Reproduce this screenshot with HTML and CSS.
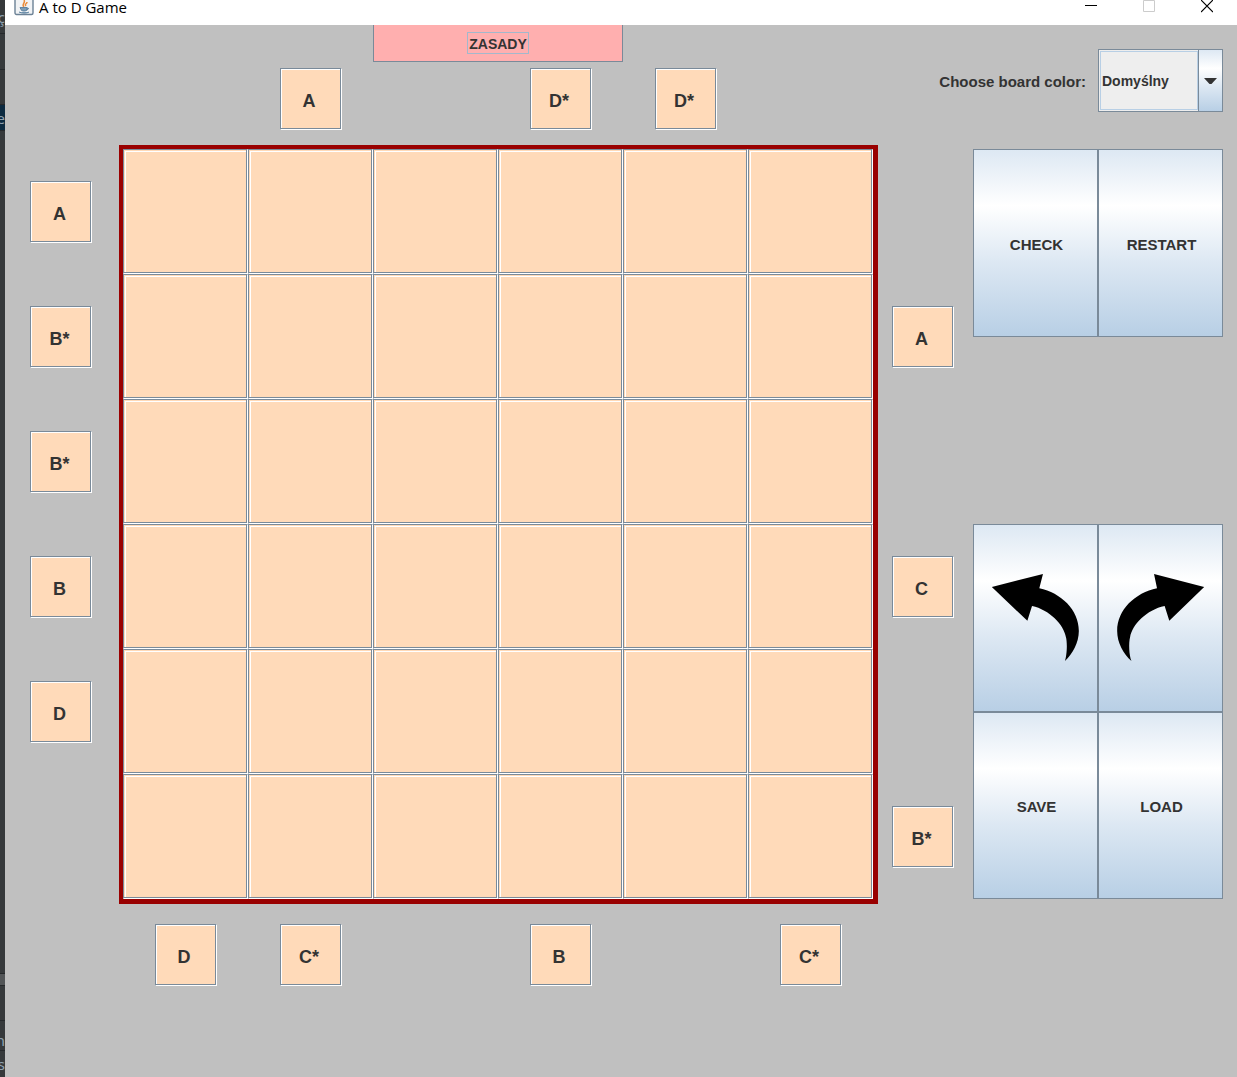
FILE: index.html
```html
<!DOCTYPE html>
<html lang="pl">
<head>
<meta charset="utf-8">
<meta name="viewport" content="width=device-width, initial-scale=1">
<title>A to D Game</title>
<link rel="stylesheet" href="styles.css">
</head>
<body>
<div class="backdrop" aria-hidden="true">
  <div class="strip strip-title">ç</div>
  <div class="strip strip-tabs"></div>
  <div class="strip strip-tools"></div>
  <div class="strip strip-selected">e</div>
  <div class="strip strip-fill"></div>
  <div class="strip strip-light"></div>
  <div class="strip strip-tools"></div>
  <div class="strip strip-status">n</div>
  <div class="strip strip-last">s</div>
</div>
<div class="window">
  <header class="titlebar">
    <svg class="app-icon" viewBox="0 4 20 16" aria-hidden="true">
      <rect x="1" y="-3" width="18" height="21.500" rx="1.500" fill="#f1f3f5" stroke="#6c8296" stroke-width="1.400"/>
      <path d="M10 11C7 8 12 7 10 4M12 10c-2-2 1-2 1-4" fill="none" stroke="#e98b3a" stroke-width="1.500"/>
      <path d="M6 11.500h7v2c0 2-6 2-6 0zM13 12c3 0 1 2-1 2M5 16c3 1.500 8 1.500 10 0" fill="#7d9cb5" stroke="#5f84a2" stroke-width="1"/>
    </svg>
    <h1 class="title">A to D Game</h1>
    <div class="window-buttons">
      <button class="window-button" type="button" aria-label="Minimize"><svg width="12" height="13" viewBox="0 0 12 13"><path d="M0 5.500h12" stroke="#000"/></svg></button>
      <button class="window-button" type="button" aria-label="Maximize" disabled><svg width="12" height="13" viewBox="0 0 12 13"><path d="M.5 .5h11v11h-11z" fill="none" stroke="#ccc"/></svg></button>
      <button class="window-button" type="button" aria-label="Close"><svg width="12" height="13" viewBox="0 0 12 13"><path d="M0 0l12 12M12 0L0 12" stroke="#000" stroke-width="1.200"/></svg></button>
    </div>
  </header>
  <main class="game">
    <div class="top">
      <button class="rules" type="button"><span class="rules-text">ZASADY</span></button>
      <span class="clue at-2">A</span>
      <span class="clue at-4">D*</span>
      <span class="clue at-5">D*</span>
    </div>
    <div class="color-row">
      <label class="color-label" for="board-color">Choose board color:</label>
      <div class="combo">
        <select id="board-color" class="combo-select"><option>Domyślny</option></select>
        <span class="combo-arrow"><svg width="13" height="7" viewBox="0 0 13 7" aria-hidden="true"><path d="M0 0h13L7.500 6h-2z" fill="#333"/></svg></span>
      </div>
    </div>
    <div class="side">
      <span class="clue">A</span>
      <span class="clue">B*</span>
      <span class="clue">B*</span>
      <span class="clue">B</span>
      <span class="clue">D</span>
    </div>
    <div class="board">
      <button class="cell" type="button" aria-label="1, 1"></button><button class="cell" type="button" aria-label="1, 2"></button><button class="cell" type="button" aria-label="1, 3"></button><button class="cell" type="button" aria-label="1, 4"></button><button class="cell" type="button" aria-label="1, 5"></button><button class="cell" type="button" aria-label="1, 6"></button>
      <button class="cell" type="button" aria-label="2, 1"></button><button class="cell" type="button" aria-label="2, 2"></button><button class="cell" type="button" aria-label="2, 3"></button><button class="cell" type="button" aria-label="2, 4"></button><button class="cell" type="button" aria-label="2, 5"></button><button class="cell" type="button" aria-label="2, 6"></button>
      <button class="cell" type="button" aria-label="3, 1"></button><button class="cell" type="button" aria-label="3, 2"></button><button class="cell" type="button" aria-label="3, 3"></button><button class="cell" type="button" aria-label="3, 4"></button><button class="cell" type="button" aria-label="3, 5"></button><button class="cell" type="button" aria-label="3, 6"></button>
      <button class="cell" type="button" aria-label="4, 1"></button><button class="cell" type="button" aria-label="4, 2"></button><button class="cell" type="button" aria-label="4, 3"></button><button class="cell" type="button" aria-label="4, 4"></button><button class="cell" type="button" aria-label="4, 5"></button><button class="cell" type="button" aria-label="4, 6"></button>
      <button class="cell" type="button" aria-label="5, 1"></button><button class="cell" type="button" aria-label="5, 2"></button><button class="cell" type="button" aria-label="5, 3"></button><button class="cell" type="button" aria-label="5, 4"></button><button class="cell" type="button" aria-label="5, 5"></button><button class="cell" type="button" aria-label="5, 6"></button>
      <button class="cell" type="button" aria-label="6, 1"></button><button class="cell" type="button" aria-label="6, 2"></button><button class="cell" type="button" aria-label="6, 3"></button><button class="cell" type="button" aria-label="6, 4"></button><button class="cell" type="button" aria-label="6, 5"></button><button class="cell" type="button" aria-label="6, 6"></button>
    </div>
    <div class="side side-right">
      <span class="clue row-2">A</span>
      <span class="clue row-4">C</span>
      <span class="clue row-6">B*</span>
    </div>
    <div class="actions">
      <button class="action" type="button">CHECK</button>
      <button class="action" type="button">RESTART</button>
      <button class="action action-icon row-3" type="button" aria-label="Undo">
        <svg class="arrow" viewBox="80 220 267 268"><path d="M82 262L236 223L225 266C290 280 344 330 344 395C344 430 325 465 302 485C308 470 310 430 305 413C299 375 255 330 203 319L189 364Z"/></svg>
      </button>
      <button class="action action-icon row-3" type="button" aria-label="Redo">
        <svg class="arrow" viewBox="454 220 267 268"><path d="M719 262L568 223L577 266C511 280 457 330 457 395C457 430 476 465 500 485C493 470 491 430 496 413C502 375 546 330 600 319L614 364Z"/></svg>
      </button>
      <button class="action row-4" type="button">SAVE</button>
      <button class="action row-4" type="button">LOAD</button>
    </div>
    <div class="bottom">
      <span class="clue at-1">D</span>
      <span class="clue at-2">C*</span>
      <span class="clue at-4">B</span>
      <span class="clue at-6">C*</span>
    </div>
  </main>
</div>
</body>
</html>
```
FILE: styles.css
```css
:root {
  --peach: #ffdab9;
  --line: #7a8a99;
  --metal: linear-gradient(#dde8f3, #fff 30%, #dde8f3 60%, #b8cfe5);
}

* {
  box-sizing: border-box;
}

body {
  margin: 0;
  display: flex;
  min-height: 100vh;
  background: #c0c0c0;
  color: #333;
  font: bold 15px/18px "Liberation Sans", Arial, sans-serif;
}

button,
select {
  margin: 0;
  padding: 0;
  border-radius: 0;
  color: inherit;
  font: inherit;
}

/* Edge of the editor behind the game window */
.backdrop {
  display: flex;
  flex-direction: column;
  width: 5px;
  overflow: hidden;
  background: #36393b;
  color: #8fa1b0;
  font: 15px/18px "Noto Sans", sans-serif;
}

.strip {
  display: flex;
  justify-content: flex-end;
  border-bottom: 1px solid #25282a;
}

.strip-title {
  height: 34px;
  padding-top: 8px;
}

.strip-tabs {
  height: 36px;
}

.strip-tools {
  height: 35px;
}

.strip-selected {
  height: 26px;
  padding-top: 4px;
  background: #0c2a40;
}

.strip-fill {
  flex: 1;
}

.strip-light {
  height: 12px;
  background: #525557;
}

.strip-status {
  height: 30px;
  padding-top: 10px;
}

.strip-last {
  height: 26px;
  padding-top: 4px;
  border: 0;
}

.window {
  flex: 1;
  min-width: 0;
}

.titlebar {
  display: flex;
  align-items: flex-start;
  height: 25px;
  padding: 0 1px 0 9px;
  background: #fff;
  color: #000;
}

.app-icon {
  width: 20px;
  height: 16px;
}

.title {
  flex: 1;
  margin: 0 0 0 5px;
  font: 15px/14px "Open Sans", "Noto Sans", sans-serif;
}

.window-buttons {
  display: flex;
}

.window-button {
  display: flex;
  justify-content: center;
  width: 58px;
  height: 25px;
  border: 0;
  background: none;
}

.game {
  display: grid;
  grid-template-columns: 89px minmax(0, 1fr) 95px 250px;
  padding: 0 14px 0 25px;
}

.top,
.bottom {
  display: grid;
  grid-template-columns: repeat(6, 1fr);
  grid-column: 2;
  justify-items: center;
  padding: 0 5px 0 4px;
}

.top {
  grid-template-rows: 37px 62px;
  row-gap: 6px;
  padding-bottom: 15px;
}

.bottom {
  padding-top: 20px;
}

.rules {
  grid-column: 3 / 5;
  justify-self: stretch;
  border: 1px solid var(--line);
  border-top: 0;
  background: #ffafaf;
  font-size: 14px;
}

.rules-text {
  display: inline-block;
  height: 22px;
  padding: 0 1px;
  border: 1px solid #a3b8cc;
  line-height: 22px;
}

.clue {
  display: flex;
  align-items: center;
  justify-content: center;
  width: 62px;
  height: 62px;
  padding: 4px 3px 0 0;
  border: 1px solid;
  border-color: var(--line) #fff #fff var(--line);
  background: var(--peach);
  box-shadow: inset -1px -1px var(--line), inset 1px 1px #fff;
  font-size: 18px;
}

.top .clue {
  grid-row: 2;
}

.at-1 { grid-column: 1; }
.at-2 { grid-column: 2; }
.at-4 { grid-column: 4; }
.at-5 { grid-column: 5; }
.at-6 { grid-column: 6; }

.row-2 { grid-row: 2; }
.row-3 { grid-row: 3; }
.row-4 { grid-row: 4; }
.row-6 { grid-row: 6; }

.color-row {
  display: flex;
  grid-column: 3 / 5;
  align-items: center;
  align-self: start;
  justify-content: flex-end;
  gap: 12px;
  padding-top: 24px;
  white-space: nowrap;
}

.color-label {
  padding-top: 2px;
}

.combo {
  position: relative;
  width: 125px;
  height: 63px;
}

.combo::before {
  content: "";
  position: absolute;
  inset: 2px 25px 2px 2px;
  border: 1px solid #b8cfe5;
  pointer-events: none;
}

.combo-select {
  width: 100%;
  height: 100%;
  padding: 0 26px 0 3px;
  appearance: none;
  border: 1px solid var(--line);
  background: #eee;
  font-size: 14px;
}

.combo-arrow {
  position: absolute;
  inset: 0 0 0 auto;
  display: flex;
  align-items: center;
  justify-content: center;
  width: 25px;
  padding-top: 2px;
  border: 1px solid var(--line);
  background: var(--metal);
  pointer-events: none;
}

.side {
  display: grid;
  grid-template-rows: repeat(6, 1fr);
  align-items: center;
  padding: 4px 0 5px;
}

.side-right {
  padding-left: 14px;
}

.board {
  display: grid;
  grid-template-rows: repeat(6, 1fr);
  grid-template-columns: repeat(6, 1fr);
  aspect-ratio: 1;
  border: solid #900;
  border-width: 4px 5px 5px 4px;
}

.cell {
  border: 1px solid;
  border-color: var(--line) #fff #fff var(--line);
  background: var(--peach);
  box-shadow: inset -1px -1px var(--line), inset 1px 1px var(--peach), inset 2px 2px #fff;
}

.actions {
  display: grid;
  grid-template-rows: repeat(4, 1fr);
  grid-template-columns: 1fr 1fr;
  padding: 4px 0 5px;
}

.action {
  display: flex;
  align-items: center;
  justify-content: center;
  padding: 4px 0 0 2px;
  border: 1px solid var(--line);
  background: var(--metal);
}

.action-icon {
  padding: 0;
}

.arrow {
  width: 89px;
  height: 89px;
}
```
